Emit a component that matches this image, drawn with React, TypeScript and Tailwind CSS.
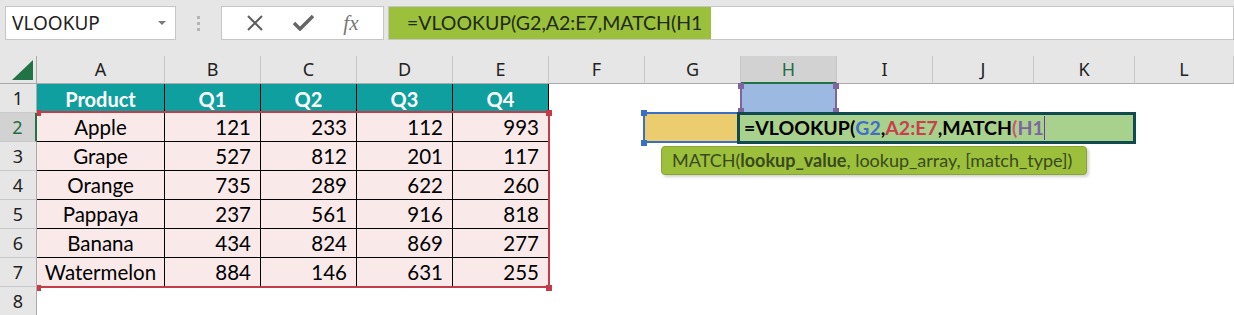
import React from 'react';

const COLS = ['A', 'B', 'C', 'D', 'E', 'F', 'G', 'H', 'I', 'J', 'K', 'L'];

const ROWS: [string, number, number, number, number][] = [
  ['Apple', 121, 233, 112, 993],
  ['Grape', 527, 812, 201, 117],
  ['Orange', 735, 289, 622, 260],
  ['Pappaya', 237, 561, 916, 818],
  ['Banana', 434, 824, 869, 277],
  ['Watermelon', 884, 146, 631, 255],
];

const cellFont = { fontFamily: 'Lato, "Noto Sans", sans-serif' };
const uiFont = { fontFamily: '"Noto Sans", "Open Sans", sans-serif' };

// small square handle on a reference border
const Handle = ({ className }: { className: string }) => (
  <div className={`absolute w-[6px] h-[6px] ${className}`} />
);

const Toolbar = () => (
  <div className="h-[56px] bg-[#e6e6e6] flex items-start pt-[6px] pl-[5px]" style={uiFont}>
    {/* name box */}
    <div className="w-[171px] h-[34px] bg-white border border-[#c6c6c6] flex items-center justify-between pl-[6px] pr-[9px]">
      <span className="text-[19px] text-[#222]">VLOOKUP</span>
      <svg width="8" height="4" viewBox="0 0 8 4">
        <path d="M0 0 L8 0 L4 4 Z" fill="#7a7a7a" />
      </svg>
    </div>
    <div className="w-[45px] h-[34px] flex flex-col items-center justify-center gap-[3px]">
      <div className="w-[3px] h-[3px] bg-[#b4b4b4]" />
      <div className="w-[3px] h-[3px] bg-[#b4b4b4]" />
      <div className="w-[3px] h-[3px] bg-[#b4b4b4]" />
    </div>
    {/* cancel / enter / fx */}
    <div className="w-[163px] h-[34px] bg-white border border-[#c6c6c6] flex items-center justify-around px-[10px]">
      <svg width="18" height="16" viewBox="0 0 18 16">
        <path d="M2 1 L16 15 M16 1 L2 15" stroke="#5e5e5e" strokeWidth="2" fill="none" />
      </svg>
      <svg width="21" height="16" viewBox="0 0 21 16">
        <path d="M1 8 L7 14 L20 1" stroke="#666" strokeWidth="3.5" fill="none" />
      </svg>
      <span
        className="text-[21px] italic text-[#777] leading-none"
        style={{ fontFamily: '"Liberation Serif", "DejaVu Serif", serif' }}
      >
        fx
      </span>
    </div>
    {/* formula bar */}
    <div className="ml-[4px] flex-1 h-[34px] bg-white border border-[#c6c6c6] flex">
      <div
        className="w-[322px] h-full bg-[#9bc03b] flex items-center pl-[18px] text-[19.5px] text-[#1e2a12]"
        style={cellFont}
      >
        =VLOOKUP(G2,A2:E7,MATCH(H1
      </div>
    </div>
  </div>
);

const Sheet = () => {
  const headerCell = (c: string) => {
    const active = c === 'H';
    return (
      <div
        key={c}
        className={`flex items-center justify-center text-[18px] border-r border-[#c8c8c8] ${
          active
            ? 'bg-[#d2d2d2] text-[#1e6e42] border-b-2 border-b-[#217346]'
            : 'bg-[#e6e6e6] text-[#222] border-b border-b-[#ababab]'
        }`}
        style={uiFont}
      >
        {c}
      </div>
    );
  };

  const rowHeader = (n: number) => {
    const active = n === 2;
    return (
      <div
        key={`r${n}`}
        className={`flex items-center justify-center text-[18px] border-b border-[#c8c8c8] ${
          active
            ? 'bg-[#d2d2d2] text-[#1e6e42] border-r-2 border-r-[#217346]'
            : 'bg-[#e6e6e6] text-[#222] border-r border-r-[#ababab]'
        }`}
        style={uiFont}
      >
        {n}
      </div>
    );
  };

  const empty = (key: string) => <div key={key} className="bg-white" />;

  const cells: React.ReactNode[] = [];
  // corner
  cells.push(
    <div key="corner" className="bg-[#e6e6e6] border-r border-b border-[#ababab] flex items-end justify-end pr-[3px] pb-[3px]">
      <svg width="21" height="20" viewBox="0 0 21 20">
        <path d="M0 20 L21 0 L21 20 Z" fill="#217346" />
      </svg>
    </div>
  );
  COLS.forEach((c) => cells.push(headerCell(c)));

  // row 1: table header
  cells.push(rowHeader(1));
  ['Product', 'Q1', 'Q2', 'Q3', 'Q4'].forEach((h) =>
    cells.push(
      <div
        key={`h${h}`}
        className="bg-[#0f9f9f] border-r border-black flex items-center justify-center text-white font-bold text-[20px]"
        style={cellFont}
      >
        {h}
      </div>
    )
  );
  for (let i = 5; i < COLS.length; i++) cells.push(empty(`1-${i}`));

  // rows 2-7: data
  ROWS.forEach((row, ri) => {
    cells.push(rowHeader(ri + 2));
    row.forEach((v, ci) =>
      cells.push(
        <div
          key={`${ri}-${ci}`}
          className={`bg-[#f9e9e9] border-r border-b border-black flex items-center pt-[1px] text-[20.5px] text-black ${
            ci === 0 ? 'justify-center' : 'justify-end pr-[9px]'
          }`}
          style={cellFont}
        >
          {v}
        </div>
      )
    );
    for (let i = 5; i < COLS.length; i++) cells.push(empty(`${ri}-e${i}`));
  });

  // row 8
  cells.push(rowHeader(8));
  for (let i = 0; i < COLS.length; i++) cells.push(empty(`8-${i}`));

  return (
    <div className="relative grid grid-cols-[37px_128px_96px_96px_96px_96px_96px_96px_96px_96px_101px_101px_1fr] grid-rows-[28px_repeat(8,29px)]">
      {cells}

      {/* A2:E7 reference (red) */}
      <div className="absolute left-[37px] top-[55px] w-[513px] h-[177px] border-2 border-l-0 border-[#c43b4a]" />
      <Handle className="left-[37px] top-[54px] !w-[4px] bg-[#c43b4a]" />
      <Handle className="left-[546px] top-[54px] bg-[#c43b4a]" />
      <Handle className="left-[37px] top-[229px] !w-[4px] bg-[#c43b4a]" />
      <Handle className="left-[546px] top-[229px] bg-[#c43b4a]" />

      {/* H1 reference (purple) */}
      <div className="absolute left-[740px] top-[28px] w-[97px] h-[29px] bg-[#9bb9e1] border-x-2 border-[#8064a2]" />
      <Handle className="left-[738px] top-[27px] bg-[#8064a2]" />
      <Handle className="left-[833px] top-[27px] bg-[#8064a2]" />
      <Handle className="left-[738px] top-[52px] bg-[#8064a2]" />
      <Handle className="left-[833px] top-[52px] bg-[#8064a2]" />

      {/* G2 reference (blue) */}
      <div className="absolute left-[643px] top-[56px] w-[98px] h-[31px] bg-[#ebcd70] border-2 border-[#3b6fc4]" />
      <Handle className="left-[641px] top-[54px] bg-[#3b6fc4]" />
      <Handle className="left-[641px] top-[84px] bg-[#3b6fc4]" />

      {/* in-cell editor */}
      <div
        className="absolute left-[737px] top-[56px] w-[399px] h-[32px] bg-[#a9d18e] border-[3px] border-[#0e4a50] flex items-center pl-[4px] text-[19.5px] font-bold text-black whitespace-nowrap"
        style={cellFont}
      >
        <span>=VLOOKUP(</span>
        <span className="text-[#3f6fc6]">G2</span>
        <span>,</span>
        <span className="text-[#c8404e]">A2:E7</span>
        <span>,MATCH</span>
        <span className="text-[#d0566a]">(</span>
        <span className="text-[#8064a2]">H1</span>
        <span className="w-px h-[24px] bg-[#6a3e99]" />
      </div>

      {/* function tooltip */}
      <div
        className="absolute left-[661px] top-[90px] w-[426px] h-[29px] bg-[#9cbf3c] border border-[#87a634] rounded-[4px] shadow-[2px_2px_3px_rgba(0,0,0,0.18)] flex items-center pl-[10px] text-[18px] text-[#3a4a1c] whitespace-nowrap"
        style={cellFont}
      >
        MATCH(<b>lookup_value</b>, lookup_array, [match_type])
      </div>
    </div>
  );
};

export default function App() {
  return (
    <div className="w-[1234px] h-[315px] overflow-hidden bg-white">
      <Toolbar />
      <Sheet />
    </div>
  );
}
